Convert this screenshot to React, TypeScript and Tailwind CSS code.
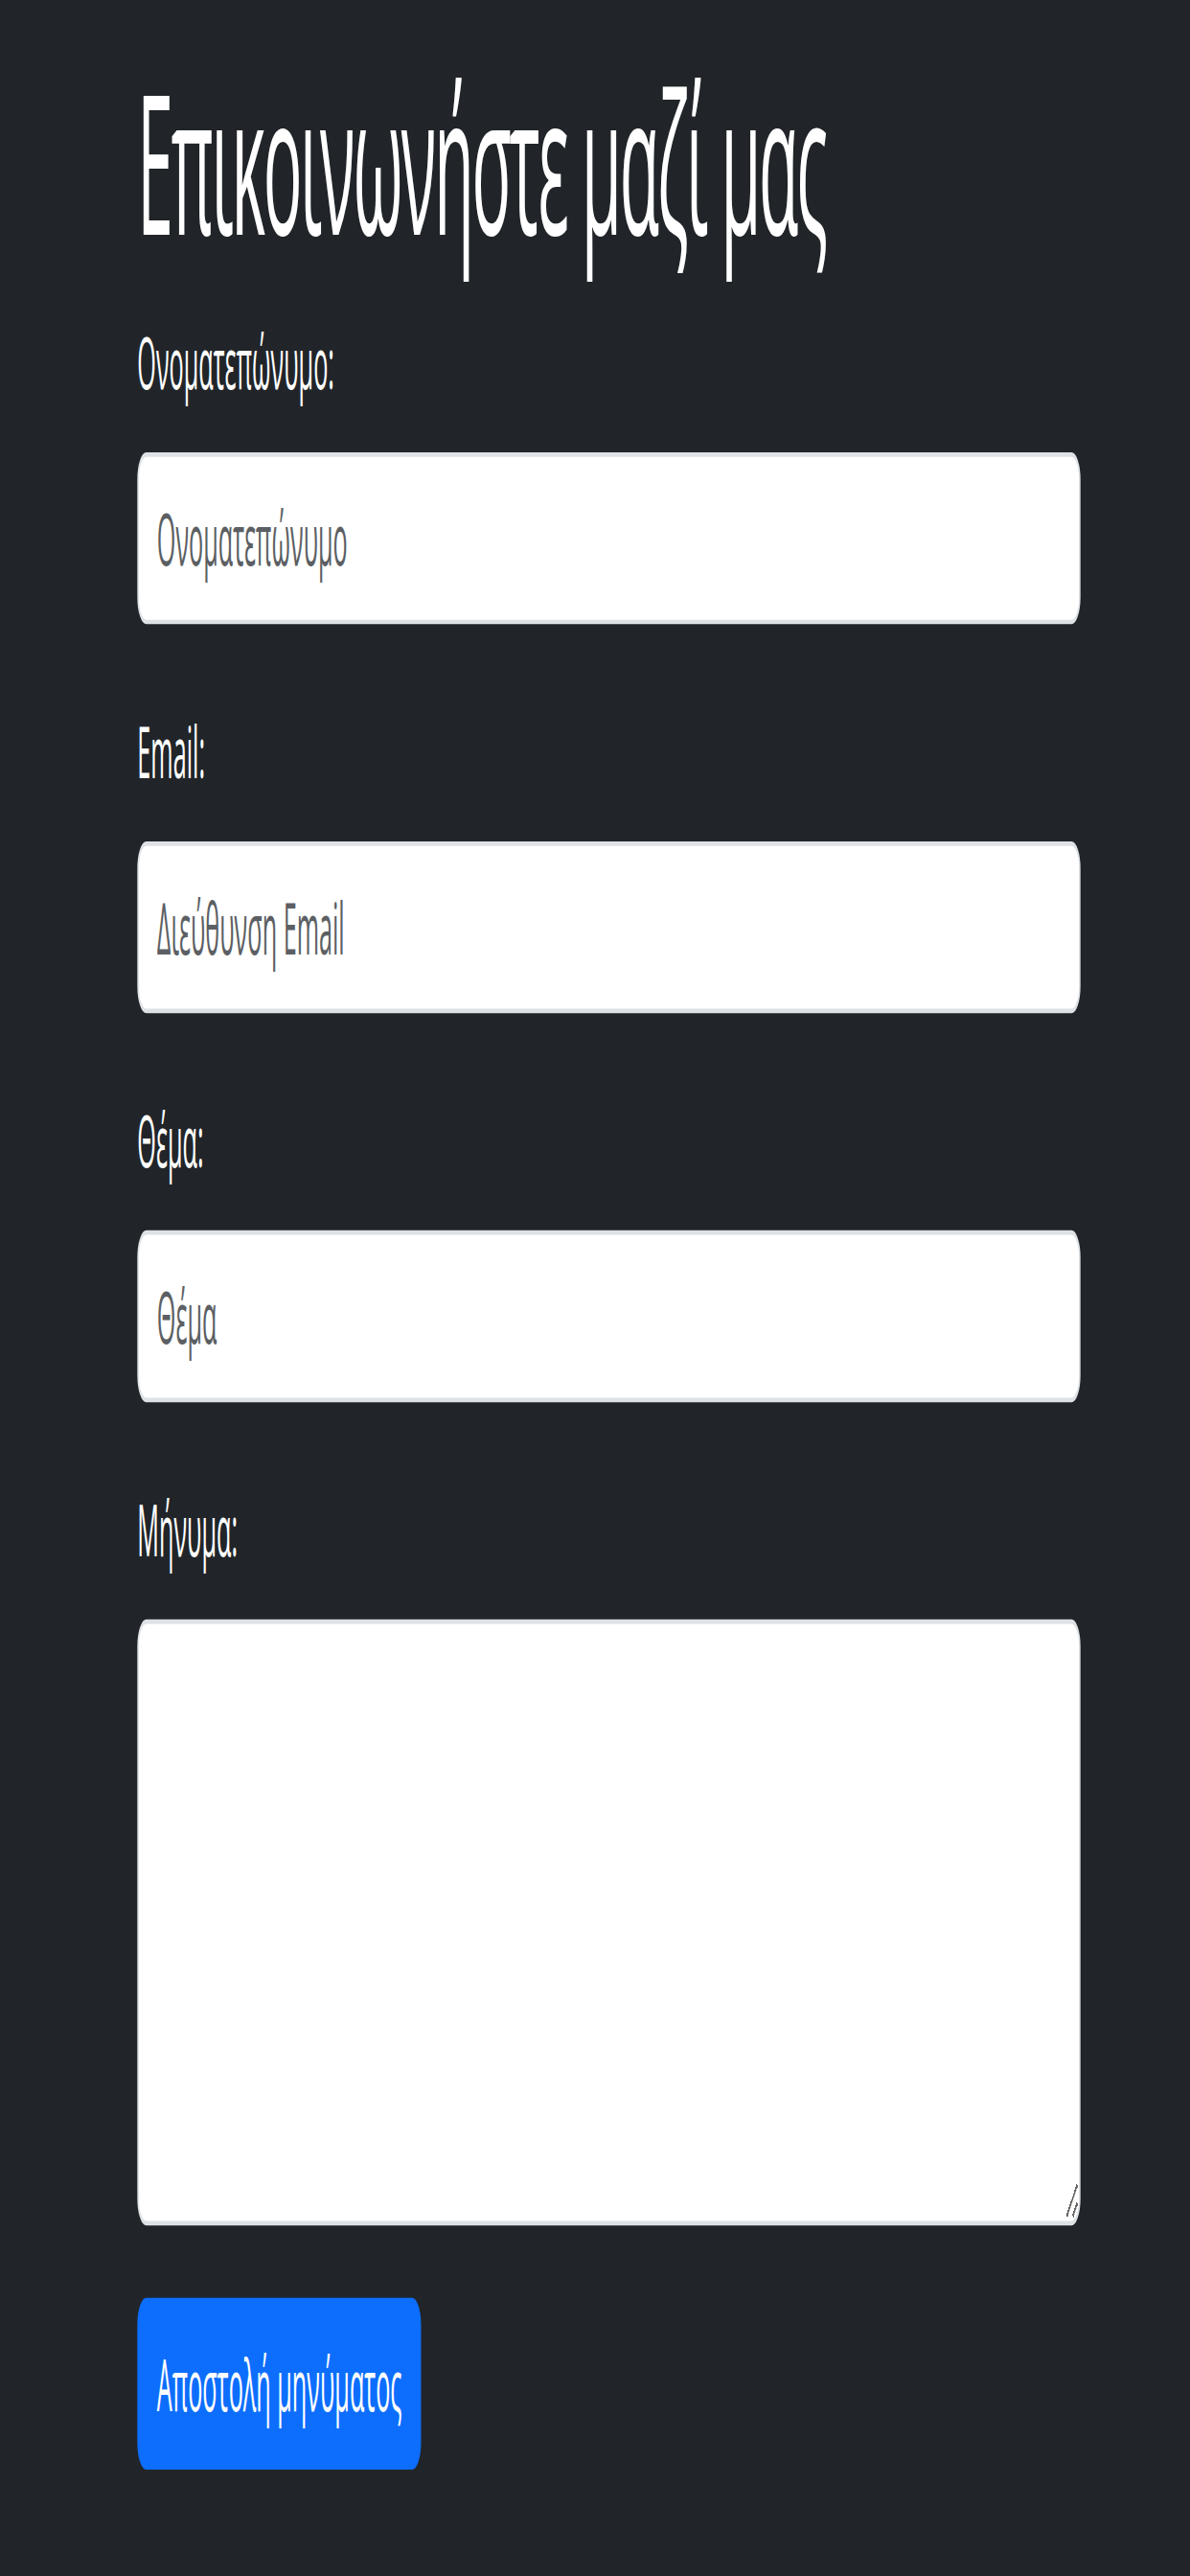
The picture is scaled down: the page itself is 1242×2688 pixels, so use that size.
export default function App() {
  const font = { fontFamily: '"Open Sans", "Noto Sans", sans-serif' };
  return (
    <div className="min-h-screen overflow-hidden bg-[#212529] text-white" style={font}>
      {/* the reference is a stretched capture: lay out at natural size, then stretch */}
      <div className="w-[789px] origin-top-left scale-x-[1.575] scale-y-[4.72] pl-[91px] pt-[12px]">
        <div className="w-[625px]">
          <h1 className="mb-2 text-[43px] font-normal leading-[48px] tracking-[-1.4px]">Επικοινωνήστε μαζί μας</h1>

          <form className="flex flex-col">
            <div className="mb-4">
              <label htmlFor="name" className="mb-2 block text-base font-medium leading-6">Ονοματεπώνυμο:</label>
              <input
                id="name"
                type="text"
                placeholder="Ονοματεπώνυμο"
                className="block h-[38px] w-full rounded-[6px] border border-[#dee2e6] bg-white px-3 py-1.5 text-base text-[#212529] placeholder:text-[#5c5f63] focus:outline-none"
              />
            </div>

            <div className="mb-4">
              <label htmlFor="email" className="mb-2 block text-base font-medium leading-6">Email:</label>
              <input
                id="email"
                type="email"
                placeholder="Διεύθυνση Email"
                className="block h-[38px] w-full rounded-[6px] border border-[#dee2e6] bg-white px-3 py-1.5 text-base text-[#212529] placeholder:text-[#5c5f63] focus:outline-none"
              />
            </div>

            <div className="mb-4">
              <label htmlFor="subject" className="mb-2 block text-base font-medium leading-6">Θέμα:</label>
              <input
                id="subject"
                type="text"
                placeholder="Θέμα"
                className="block h-[38px] w-full rounded-[6px] border border-[#dee2e6] bg-white px-3 py-1.5 text-base text-[#212529] placeholder:text-[#5c5f63] focus:outline-none"
              />
            </div>

            <div className="mb-4">
              <label htmlFor="message" className="mb-2 block text-base font-medium leading-6">Μήνυμα:</label>
              <textarea
                id="message"
                rows={5}
                className="block h-[134px] w-full rounded-[6px] border border-[#dee2e6] bg-white px-3 py-1.5 text-base text-[#212529] focus:outline-none"
              ></textarea>
            </div>

            <div>
              <button
                type="submit"
                className="h-[38px] rounded-[6px] border border-[#0d6efd] bg-[#0d6efd] px-3 text-base leading-6 text-white"
              >
                Αποστολή μηνύματος
              </button>
            </div>
          </form>
        </div>
      </div>
    </div>
  );
}
